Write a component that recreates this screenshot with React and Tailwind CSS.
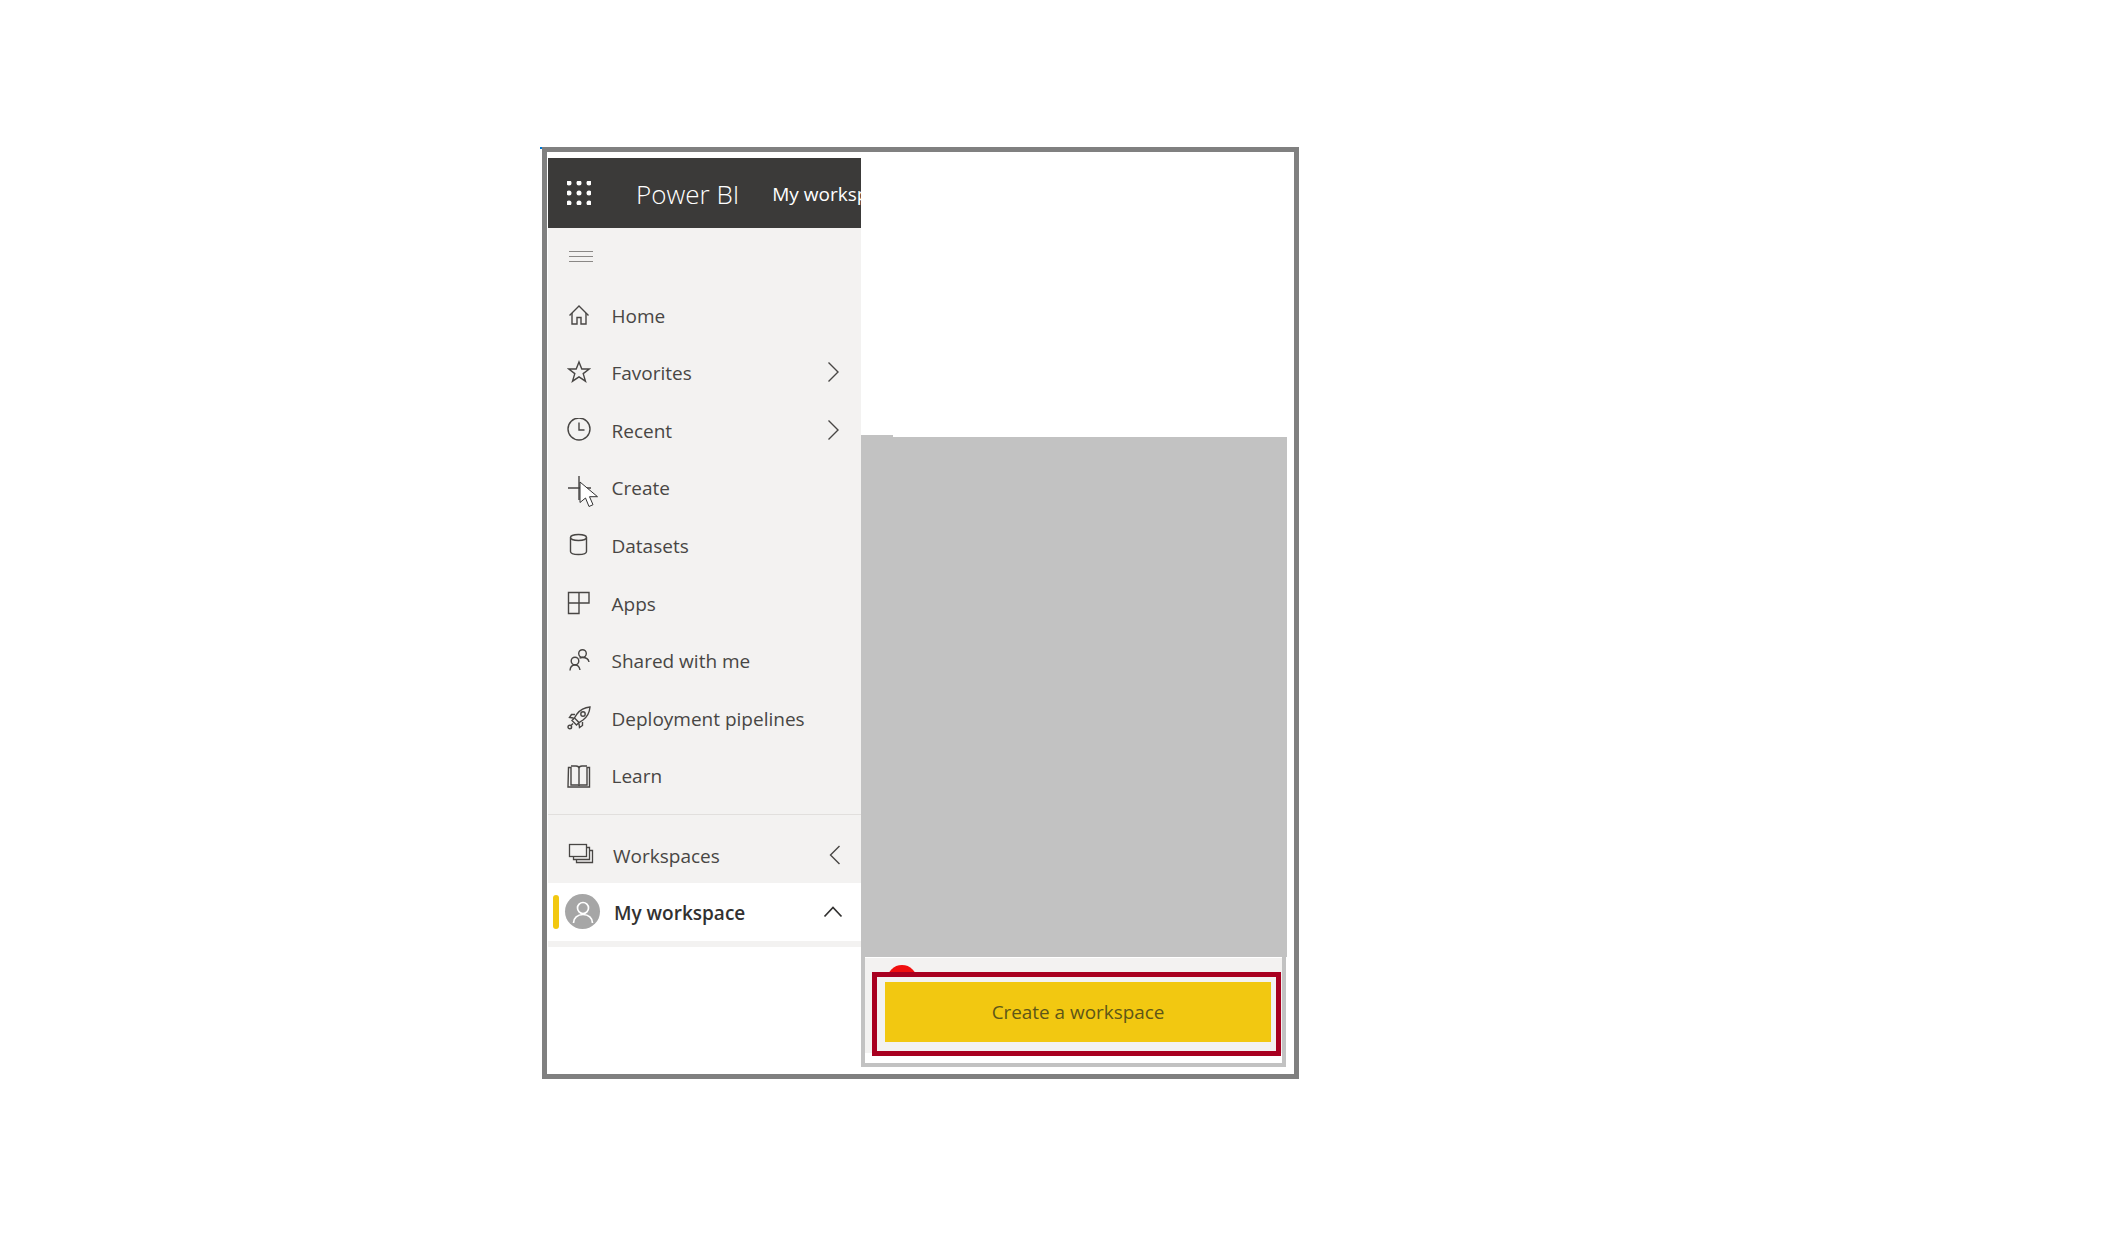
import React from "react";

const stroke = "#484644";

const Icon = ({ children, size = 24 }) => (
  <svg width={size} height={size} viewBox="0 0 24 24" fill="none" stroke={stroke} strokeWidth="1.4" className="shrink-0">
    {children}
  </svg>
);

const HomeIcon = () => (
  <Icon>
    <path d="M2.5 12.5 12 3l9.5 9.5" />
    <path d="M5 10v11h5v-6.5h4V21h5V10" />
  </Icon>
);
const StarIcon = () => (
  <Icon>
    <path d="M12 2l2.8 7h7.4l-6 4.6 2.3 7.600L12 16.800l-6.500 4.400 2.300-7.600-6-4.600h7.400z" />
  </Icon>
);
const ClockIcon = () => (
  <Icon>
    <circle cx="12" cy="11" r="11" />
    <path d="M12 4.500V12h5.500" />
  </Icon>
);
const PlusIcon = () => (
  <Icon>
    <path d="M12 0v24M1 12h23" />
  </Icon>
);
const DatasetIcon = () => (
  <Icon>
    <ellipse cx="11.500" cy="4.500" rx="8" ry="3" />
    <path d="M3.500 4.500v14c0 1.800 3.600 3 8 3s8-1.200 8-3v-14" />
  </Icon>
);
const AppsIcon = () => (
  <Icon>
    <path d="M1.500 1.500h20.500v10.500H12v10.500H1.500zM1.500 12H12M12 1.500V12" />
  </Icon>
);
const SharedIcon = () => (
  <Icon>
    <circle cx="15.500" cy="5.500" r="3.800" />
    <path d="M22 14c-.5-2.800-3-4.500-6.500-4.500-1.200 0-2.200.2-3 .600" />
    <circle cx="8" cy="13" r="3.800" />
    <path d="M3 22.500c.2-3 2-5.500 5-5.500s4.500 2 5 5" />
  </Icon>
);
const RocketIcon = () => (
  <Icon>
    <path d="M23 1c-6 .5-10 3-13 7l-2.500 4 4.500 4.500 4-2.500c4-3 6.500-7 7-13z" />
    <circle cx="16" cy="8" r="2.200" />
    <path d="M8 8.500H4.500l-2 3 4 .5M15.500 16v3.500l-3 2-.5-4M7.500 12 5 14.500l4.500 4.500 2.500-2.500" />
    <circle cx="2.800" cy="21" r="1.800" />
    <path d="M4 19.500l2-2" />
  </Icon>
);
const BookIcon = () => (
  <Icon>
    <path d="M1.500 3.500h2.500v17.500h7c.5 0 1 .3 1 .8 0-.5.5-.8 1-.8h7V3.500h2.500v19.500h-21.500z" />
    <path d="M4 2h5c1.800 0 3 1 3 2.500V22M20 2h-5c-1.800 0-3 1-3 2.500" />
  </Icon>
);

const Waffle = () => (
  <svg width="24" height="24" viewBox="0 0 24 24" fill="white" className="shrink-0">
    {[2, 12, 22].map((y) =>
      [2, 12, 22].map((x) => <circle key={`${x}-${y}`} cx={x} cy={y} r="2.500" />)
    )}
  </svg>
);

const ArrowRight = () => (
  <svg width="12" height="22" viewBox="0 0 12 22" fill="none" stroke={stroke} strokeWidth="1.4" className="shrink-0 -translate-y-[1px]">
    <path d="M1.500 1.500 11 11l-9.500 9.500" />
  </svg>
);

const navItems = [
  { label: "Home", icon: HomeIcon },
  { label: "Favorites", icon: StarIcon, arrow: true },
  { label: "Recent", icon: ClockIcon, arrow: true },
  { label: "Create", icon: PlusIcon, cursor: true },
  { label: "Datasets", icon: DatasetIcon },
  { label: "Apps", icon: AppsIcon },
  { label: "Shared with me", icon: SharedIcon },
  { label: "Deployment pipelines", icon: RocketIcon },
  { label: "Learn", icon: BookIcon },
];

const Cursor = () => (
  <svg width="20" height="28" viewBox="0 0 20 28" className="absolute left-[12px] top-[5px]">
    <path d="M1 1v20.500l5.500-4.500 3.500 8.500 4-1.800-3.500-8H18.500z" fill="white" stroke="#333" strokeWidth="1" />
  </svg>
);

const NavRow = ({ item }) => {
  const IconComp = item.icon;
  return (
    <div className="flex h-[57.6px] items-center pl-[19px] pr-[22px] text-[19px] text-[#484644]">
      <div className="relative mr-[20.500px] flex w-[24px] -translate-y-[1px] justify-center">
        <IconComp />
        {item.cursor && <Cursor />}
      </div>
      <span className="flex-1">{item.label}</span>
      {item.arrow && <ArrowRight />}
    </div>
  );
};

export default function App() {
  return (
    <div className="h-[1244px] bg-white pl-[542px] pt-[147px] [font-family:'Open_Sans',sans-serif]">
      <div className="relative flex h-[932px] w-[757px] border-[5px] border-[#808080] pl-[1px] pt-[6px]">
        <div className="absolute -left-[7px] -top-[5px] h-[2px] w-[2px] bg-[#0078d4]" />

        {/* left nav */}
        <div className="flex w-[313px] shrink-0 flex-col">
          <div className="flex h-[70px] items-center overflow-hidden whitespace-nowrap bg-[#3b3a39] pl-[19px] text-white">
            <Waffle />
            <span className="ml-[45px] translate-y-[1px] text-[26px] font-light">Power BI</span>
            <span className="ml-[33px] translate-y-[1px] text-[19px] font-medium">My workspace</span>
          </div>
          <div className="flex flex-col bg-[#f3f2f1]">
            <div className="flex h-[59px] flex-col justify-center gap-[3.500px] pb-[2px] pl-[21px]">
              <div className="h-[1.500px] w-[24px] bg-[#8a8886]" />
              <div className="h-[1.500px] w-[24px] bg-[#8a8886]" />
              <div className="h-[1.500px] w-[24px] bg-[#8a8886]" />
            </div>
            {navItems.map((item) => (
              <NavRow key={item.label} item={item} />
            ))}
            <div className="mt-[8.600px] flex h-[69px] items-center border-t border-[#e1dfdd] pl-[20px] pr-[20px] pt-[14px] text-[19px] text-[#484644]">
              <svg width="26" height="22" viewBox="0 0 26 22" fill="none" stroke={stroke} strokeWidth="1.300" className="mr-[19px] shrink-0 -translate-y-[2px]">
                <rect x="1.500" y="1.500" width="17" height="12" fill="#f3f2f1" />
                <path d="M18.500 4.500h3v12h-16v-3M21.500 7.500h3v12h-16v-3" />
              </svg>
              <span className="flex-1">Workspaces</span>
              <svg width="12" height="20" viewBox="0 0 12 20" fill="none" stroke={stroke} strokeWidth="1.4" className="shrink-0 -translate-y-[1px]">
                <path d="M10.500 1 1.500 10l9 9" />
              </svg>
            </div>
            <div className="flex h-[58px] items-center bg-white pl-[5px] pr-[18px]">
              <div className="h-[34px] w-[6px] rounded-[3px] bg-[#f2c811]" />
              <div className="ml-[6px] flex h-[35px] w-[35px] items-center justify-center overflow-hidden rounded-full bg-[#a6a6a6]">
                <svg width="22" height="24" viewBox="0 0 22 24" fill="none" stroke="white" strokeWidth="1.700">
                  <circle cx="11" cy="8" r="5.500" />
                  <path d="M1.500 23c0-5 4-8.500 9.500-8.500s9.500 3.500 9.500 8.500" />
                </svg>
              </div>
              <span className="ml-[14px] flex-1 translate-y-[1px] text-[19px] font-semibold text-[#323130]">My workspace</span>
              <svg width="20" height="13" viewBox="0 0 20 13" fill="none" stroke="#323130" strokeWidth="1.700" className="shrink-0">
                <path d="M1.500 11.500 10 2.500l8.500 9" />
              </svg>
            </div>
            <div className="h-[6px]" />
          </div>
        </div>

        {/* right side */}
        <div className="flex w-[426px] flex-col">
          <div className="h-[277px]" />
          <div className="h-[2px] w-[32px] bg-[#c2c2c2]" />
          <div className="h-[520px] bg-[#c2c2c2]" />
          <div className="h-[110px] w-[425px] border-x-[4px] border-b-[4px] border-[#c2c2c2] bg-white pt-[1px]">
            <div className="relative h-[95px] bg-[#f3f2f1] pl-[7px] pr-[1px] pt-[14px]">
              <div className="absolute left-[22px] top-[7px] h-[30px] w-[30px] rounded-full bg-[#f00f0f]" />
              <div className="relative h-[84px] border-[5px] border-[#a80020] bg-[#f3f2f1] pb-[9px] pl-[8px] pr-[5px] pt-[5px]">
                <div className="flex h-[60px] items-center justify-center bg-[#f2c811] text-[18.900px] text-[#5e5618]">
                  Create a workspace
                </div>
              </div>
            </div>
          </div>
        </div>
      </div>
    </div>
  );
}
